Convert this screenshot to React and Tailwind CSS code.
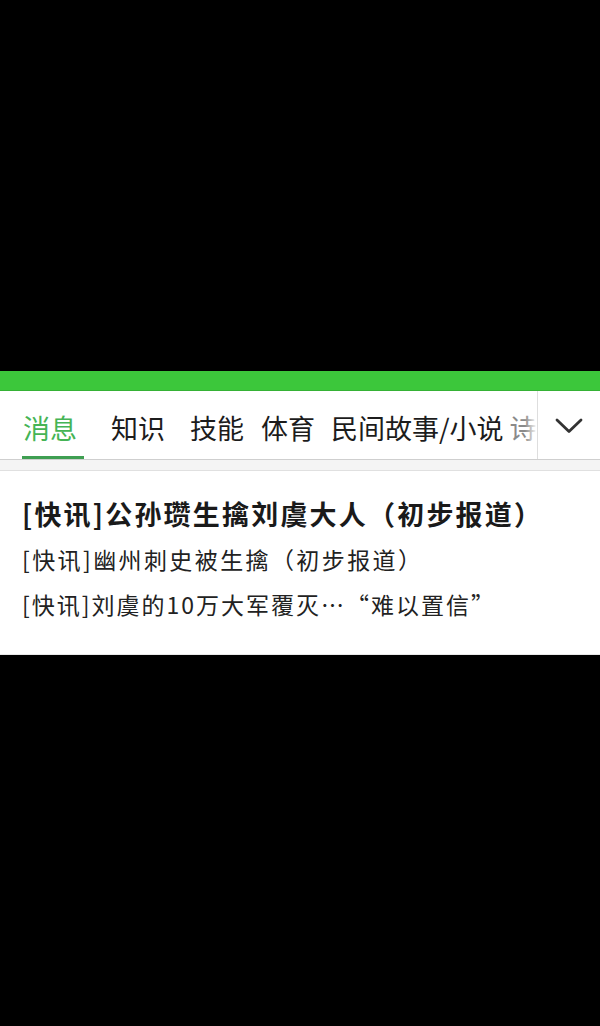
import React from "react";

const cjk = { fontFamily: '"Noto Sans CJK SC", "Noto Sans", sans-serif' };

function Tab({ label, active, className = "" }) {
  return (
    <div className={`flex flex-col h-full ${className}`}>
      <div
        className={`pt-[22px] leading-[30px] text-[27px] whitespace-nowrap ${
          active ? "text-[#45b455] pl-[1px]" : "text-[#1c1c1c]"
        }`}
      >
        {label}
      </div>
      <div className="flex-1" />
      <div className={`h-[3px] ${active ? "bg-[#3f9f52]" : "bg-transparent"}`} />
    </div>
  );
}

export default function App() {
  return (
    <div className="w-[600px] h-[1026px] bg-black flex flex-col" style={cjk}>
      <div className="h-[371px] shrink-0" />
      <div className="h-[20px] shrink-0 bg-[#3cc73b] border-b border-[#35b235]" />
      <div className="h-[69px] shrink-0 bg-white border-b border-[#cfcfcf] flex">
        <div className="flex-1 flex pl-[22px] overflow-hidden relative">
          <Tab label="消息" active className="w-[62px]" />
          <Tab label="知识" className="ml-[27px]" />
          <Tab label="技能" className="ml-[25px]" />
          <Tab label="体育" className="ml-[17px]" />
          <Tab label="民间故事/小说" className="ml-[16px]" />
          <div className="ml-[6px] pt-[22px] leading-[30px] text-[27px] text-[#8a8a8a] whitespace-nowrap">诗</div>
          <div className="absolute right-0 top-0 h-full w-[12px] bg-gradient-to-r from-white/0 to-white" />
        </div>
        <div className="w-[63px] shrink-0 border-l border-[#dedede] flex items-center justify-center">
          <svg width="28" height="16" viewBox="0 0 28 16" className="mt-[1px]">
            <polyline
              points="2,2 14,13.5 26,2"
              fill="none"
              stroke="#333"
              strokeWidth="2.8"
              strokeLinecap="round"
              strokeLinejoin="round"
            />
          </svg>
        </div>
      </div>
      <div className="h-[11px] shrink-0 bg-[#f4f4f4] border-b border-[#e0e0e0]" />
      <div className="h-[184px] shrink-0 bg-white pl-[22px] pt-[20px] border-b border-[#e8e8e8] text-[#1a1a1a]">
        <div className="text-[27px] leading-[46px] font-bold tracking-[2.2px] whitespace-nowrap">
          [快讯]公孙瓒生擒刘虞大人（初步报道）
        </div>
        <div className="text-[23px] leading-[45px] tracking-[2.4px] whitespace-nowrap text-[#222]">
          [快讯]幽州刺史被生擒（初步报道）
        </div>
        <div className="text-[23px] leading-[45px] tracking-[2px] whitespace-nowrap text-[#222]">
          [快讯]刘虞的10万大军覆灭…“难以置信”
        </div>
      </div>
      <div className="flex-1" />
    </div>
  );
}
